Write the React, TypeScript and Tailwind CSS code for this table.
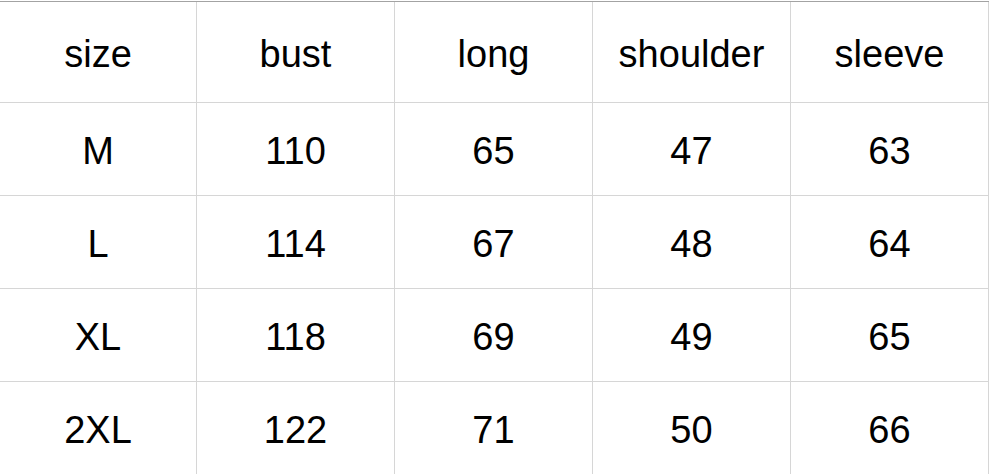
import React from "react";

const rows = [
  ["size", "bust", "long", "shoulder", "sleeve"],
  ["M", "110", "65", "47", "63"],
  ["L", "114", "67", "48", "64"],
  ["XL", "118", "69", "49", "65"],
  ["2XL", "122", "71", "50", "66"],
];

const colW = ["w-[197px]", "w-[198px]", "w-[198px]", "w-[198px]", "w-[198px]"];
const rowH = ["h-[101px]", "h-[93px]", "h-[93px]", "h-[93px]", "h-[93px]"];

export default function App() {
  return (
    <div
      className="w-[991px] h-[474px] bg-white overflow-hidden pt-px"
      style={{ fontFamily: '"Liberation Sans", Arial, sans-serif' }}
    >
      <div className="border-t border-[#a3a3a3] w-[989px]">
        {rows.map((r, i) => (
          <div key={i} className={`flex ${rowH[i]} ${i < 4 ? "border-b border-[#d6d6d6]" : ""}`}>
            {r.map((c, j) => (
              <div
                key={j}
                className={`${colW[j]} shrink-0 h-full flex items-center justify-center pt-1 border-r border-[#d6d6d6] text-[38px] text-black`}
              >
                {c}
              </div>
            ))}
          </div>
        ))}
      </div>
    </div>
  );
}
